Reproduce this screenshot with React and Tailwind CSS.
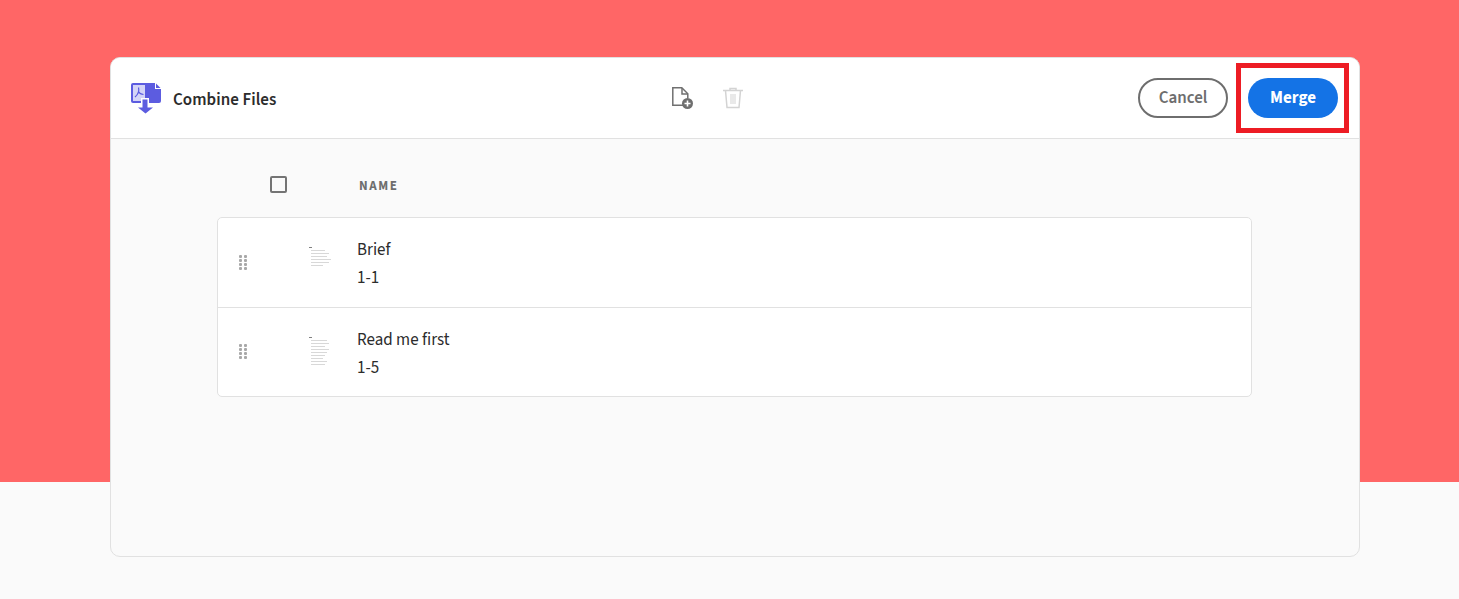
const FileRow = ({ name, pages, lines, height, handleTop }) => (
  <div className="flex items-start" style={{ height }}>
    <div className="ml-[21px] grid w-[8px] grid-cols-2 gap-x-[1px] gap-y-[1px]" style={{ marginTop: handleTop }}>
      {[0, 1, 2, 3, 4, 5, 6, 7].map((i) => (
        <span key={i} className="h-[3px] w-[3px] rounded-[1px] bg-[#a8a8a8]" />
      ))}
    </div>
    <div className="ml-[62px] mt-[29px] flex h-[36px] w-[24px] flex-col gap-[2px] blur-[0.7px]">
      <span className="h-[1px] w-[3px] bg-[#808080]" />
      {lines.map((w, i) => (
        <span key={i} className="ml-[2px] h-[1px] bg-[#d8d8d8]" style={{ width: w }} />
      ))}
    </div>
    <div className="ml-[24px] pt-[20px] text-[17px] leading-[24px] text-[#2c2c2c]">
      <p>{name}</p>
      <p className="mt-[4px]">{pages}</p>
    </div>
  </div>
);

export default function App() {
  return (
    <div
      className="relative h-[599px] overflow-hidden bg-[linear-gradient(#ff6666_482px,#fafafa_482px)] pt-[57px] pl-[110px]"
      style={{ fontFamily: '"Source Sans 3", "Noto Sans", sans-serif' }}
    >
      <div className="h-[500px] w-[1250px] overflow-hidden rounded-[10px] border border-[#e1e1e1] bg-[#fafafa]">
        {/* Header */}
        <div className="flex h-[81px] items-center border-b border-[#e1e1e1] bg-white">
          <div className="flex w-[540px] items-center pl-[19px]">
            <svg width="32" height="32" viewBox="0 0 32 32">
              <path d="M3 1h14v20H3a2 2 0 0 1-2-2V3a2 2 0 0 1 2-2z" fill="#5c5ce0" />
              <path d="M3 3h12v16H3z" fill="#d4d4f7" />
              <path d="M8.5 5.5c.8 3 .5 6-3.5 9.5M8.5 9.5c1 2 2.5 3 5 3" fill="none" stroke="#5c5ce0" strokeWidth="1.2" />
              <path d="M17 1h8l6 6v12a2 2 0 0 1-2 2H17z" fill="#5c5ce0" />
              <path d="M25 0l7 7h-7z" fill="#fff" />
              <path d="M26 1.5l4.5 4.500H26z" fill="#5c5ce0" />
              <path d="M11 16h8v8h7l-9.500 8.500L6 24h5z" fill="#fff" />
              <path d="M12.500 17.500h5V25.500h5.500l-7.500 6L8 25.500h4.500z" fill="#5c5ce0" />
            </svg>
            <span className="ml-[11px] mt-[5px] text-[17px] font-semibold tracking-[0.05px] text-[#2c2c2c]">Combine Files</span>
          </div>

          <svg className="ml-[19px]" width="24" height="24" viewBox="0 0 24 24">
            <path d="M13 19.300H2.800V1.800h9l6 6V12" fill="none" stroke="#707070" strokeWidth="1.500" />
            <path d="M12 2v6h6" fill="none" stroke="#707070" strokeWidth="1.500" />
            <circle cx="17.500" cy="17.500" r="5.500" fill="#6e6e6e" />
            <path d="M17.500 14.500v6M14.500 17.500h6" stroke="#fff" strokeWidth="1.600" />
          </svg>

          <svg className="ml-[27px]" width="24" height="24" viewBox="0 0 24 24" fill="none" stroke="#d3d3d3" strokeWidth="1.500">
            <path d="M2 4.500h20M9 4.500V2.500h6v2" />
            <path d="M4.500 4.500l1.500 17h12l1.500-17" />
            <path d="M10 8v10M12 8v10M14 8v10" strokeWidth="1" />
          </svg>

          <button className="ml-auto h-[40px] w-[90px] rounded-full border-2 border-[#6e6e6e] pt-[2px] text-[17px] font-semibold text-[#6e6e6e]">
            Cancel
          </button>
          <button className="mr-[21px] ml-[20px] h-[40px] w-[90px] rounded-full bg-[#1473e6] pt-[2px] text-[17px] font-bold text-white">
            Merge
          </button>
        </div>

        {/* Column heads */}
        <div className="flex h-[78px] items-center pt-[12px]">
          <span className="ml-[159px] h-[17px] w-[17px] rounded-[2px] border-2 border-[#747474]" />
          <span className="ml-[72px] mt-[6px] text-[13px] font-bold tracking-[1.6px] text-[#6e6e6e]">NAME</span>
        </div>

        {/* File list */}
        <div className="ml-[106px] w-[1035px] divide-y divide-[#e1e1e1] rounded-[5px] border border-[#e1e1e1] bg-white">
          <FileRow name="Brief" pages="1-1" height={90} handleTop={37} lines={[14, 18, 16, 20, 18, 12]} />
          <FileRow name="Read me first" pages="1-5" height={88} handleTop={36} lines={[16, 18, 14, 18, 16, 14, 12, 16, 14]} />
        </div>
      </div>

      {/* Highlight around the merge button */}
      <div className="absolute top-[63px] left-[1236px] h-[70px] w-[113px] border-[5px] border-[#ed1c24]" />
    </div>
  );
}
